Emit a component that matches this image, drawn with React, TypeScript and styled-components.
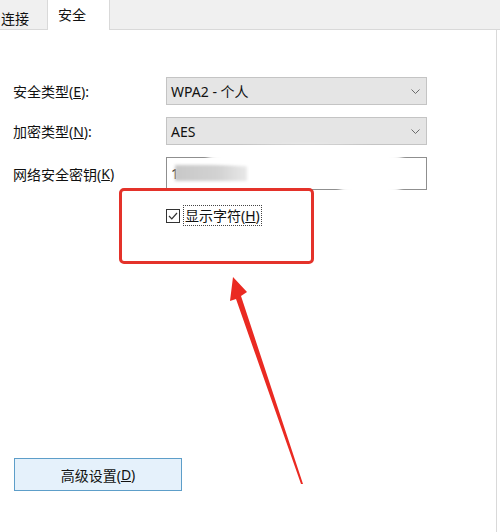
import React from 'react';
import styled, { createGlobalStyle } from 'styled-components';

const GlobalStyle = createGlobalStyle`
  html, body {
    margin: 0;
    padding: 0;
    background: #ffffff;
  }
  body {
    font-family: "Noto Sans", "Noto Sans CJK SC", sans-serif;
    font-size: 14px;
    color: #111111;
  }
`;

const Window = styled.div`
  position: relative;
  width: 500px;
  height: 532px;
  overflow: hidden;
  background: #ffffff;
  display: flex;
  flex-direction: column;
`;

const TabStrip = styled.div`
  display: flex;
  align-items: flex-end;
  height: 30px;
  box-sizing: border-box;
  margin-left: -10px;
  background: #f0f0f0;
  border-bottom: 1px solid #d9d9d9;
`;

const Tab = styled.div<{ $active?: boolean }>`
  box-sizing: border-box;
  height: ${({ $active }) => ($active ? '31px' : '26px')};
  margin-bottom: ${({ $active }) => ($active ? '-1px' : '0')};
  padding: ${({ $active }) => ($active ? '0 23px 0 10px' : '4px 17px 0 10px')};
  line-height: ${({ $active }) => ($active ? '30px' : '22px')};
  background: ${({ $active }) => ($active ? '#ffffff' : '#f0f0f0')};
  border: 1px solid ${({ $active }) => ($active ? '#d9d9d9' : 'transparent')};
  border-bottom: none;
  white-space: nowrap;
`;

const Panel = styled.div`
  flex: 1;
  width: 497px;
  box-sizing: border-box;
  border-right: 1px solid #d9d9d9;
  display: flex;
  flex-direction: column;
`;

const Form = styled.div`
  display: grid;
  grid-template-columns: 153px 261px;
  row-gap: 12px;
  padding: 47px 0 0 13px;
`;

const Label = styled.div`
  display: flex;
  align-items: center;
  white-space: nowrap;
`;

const Select = styled.div`
  box-sizing: border-box;
  height: 28px;
  display: flex;
  align-items: center;
  justify-content: space-between;
  padding: 0 6px 0 4px;
  background: #e5e5e5;
  border: 1px solid #c4c4c4;
`;

const TextBox = styled.div`
  position: relative;
  box-sizing: border-box;
  height: 33px;
  display: flex;
  align-items: center;
  padding: 0 4px;
  background: #ffffff;
  border: 1px solid #8f8f8f;
`;

const Smear = styled.div`
  position: absolute;
  left: 8px;
  top: 7px;
  width: 72px;
  height: 16px;
  background: linear-gradient(90deg, #c8c8c8 0%, #d2d2d2 60%, #e8e8e8 100%);
  filter: blur(1.5px);
`;

const Cloud = styled.div`
  position: absolute;
  left: 40px;
  top: -12px;
  width: 196px;
  height: 22px;
  border-radius: 50%;
  background: #ffffff;
  filter: blur(2px);
`;

const CloudLow = styled(Cloud)`
  left: 172px;
  top: 24px;
  width: 62px;
  height: 14px;
`;

const CheckRow = styled.div`
  grid-column: 2;
  position: relative;
  margin-top: 4px;
  display: flex;
  align-items: center;
  gap: 4px;
`;

const Box = styled.span`
  box-sizing: border-box;
  width: 14px;
  height: 14px;
  border: 1px solid #333333;
  display: flex;
  align-items: center;
  justify-content: center;
  background: #ffffff;
`;

const FocusLabel = styled.span`
  padding: 0 1px;
  line-height: 19px;
  outline: 1px dotted #444444;
`;

const Highlight = styled.div`
  position: absolute;
  left: -47px;
  top: -18px;
  width: 195px;
  height: 76px;
  box-sizing: border-box;
  border: 3px solid #e4322a;
  border-radius: 5px;
  pointer-events: none;
`;

const Footer = styled.div`
  margin-top: auto;
  padding: 0 0 41px 14px;
`;

const Button = styled.div`
  box-sizing: border-box;
  width: 168px;
  height: 33px;
  display: flex;
  align-items: center;
  justify-content: center;
  background: #e5f1fb;
  border: 1px solid #5d9ec9;
`;

const Arrow = styled.svg`
  position: absolute;
  left: 0;
  top: 0;
  pointer-events: none;
`;

function Chevron() {
  return (
    <svg width="9" height="5" viewBox="0 0 9 5">
      <path d="M0.5 0.5 L4.5 4.5 L8.5 0.5" fill="none" stroke="#6b6b6b" strokeWidth="1" />
    </svg>
  );
}

function Field({ label, mnemonic, colon, children }: { label: string; mnemonic: string; colon?: boolean; children: React.ReactNode }) {
  return (
    <>
      <Label>
        {label}(<u>{mnemonic}</u>){colon ? ':' : ''}
      </Label>
      {children}
    </>
  );
}

export default function App(): JSX.Element {
  return (
    <>
      <GlobalStyle />
      <Window>
        <TabStrip>
          <Tab>连接</Tab>
          <Tab $active>安全</Tab>
        </TabStrip>
        <Panel>
          <Form>
            <Field label="安全类型" mnemonic="E" colon>
              <Select>
                <span>WPA2 - 个人</span>
                <Chevron />
              </Select>
            </Field>
            <Field label="加密类型" mnemonic="N" colon>
              <Select>
                <span>AES</span>
                <Chevron />
              </Select>
            </Field>
            <Field label="网络安全密钥" mnemonic="K">
              <TextBox>
                <span>1</span>
                <Smear />
                <Cloud />
                <CloudLow />
              </TextBox>
            </Field>
            <CheckRow>
              <Box>
                <svg width="10" height="8" viewBox="0 0 10 8">
                  <path d="M1 4 L3.8 6.8 L9 1" fill="none" stroke="#333333" strokeWidth="1.2" />
                </svg>
              </Box>
              <FocusLabel>
                显示字符(<u>H</u>)
              </FocusLabel>
              <Highlight />
            </CheckRow>
          </Form>
          <Footer>
            <Button>
              高级设置(<u>D</u>)
            </Button>
          </Footer>
        </Panel>
        <Arrow width="500" height="532" viewBox="0 0 500 532">
          <polygon
            points="233,277 247,292 241,296 303,484 301,484 236,299 230,301"
            fill="#ea2a22"
          />
        </Arrow>
      </Window>
    </>
  );
}
